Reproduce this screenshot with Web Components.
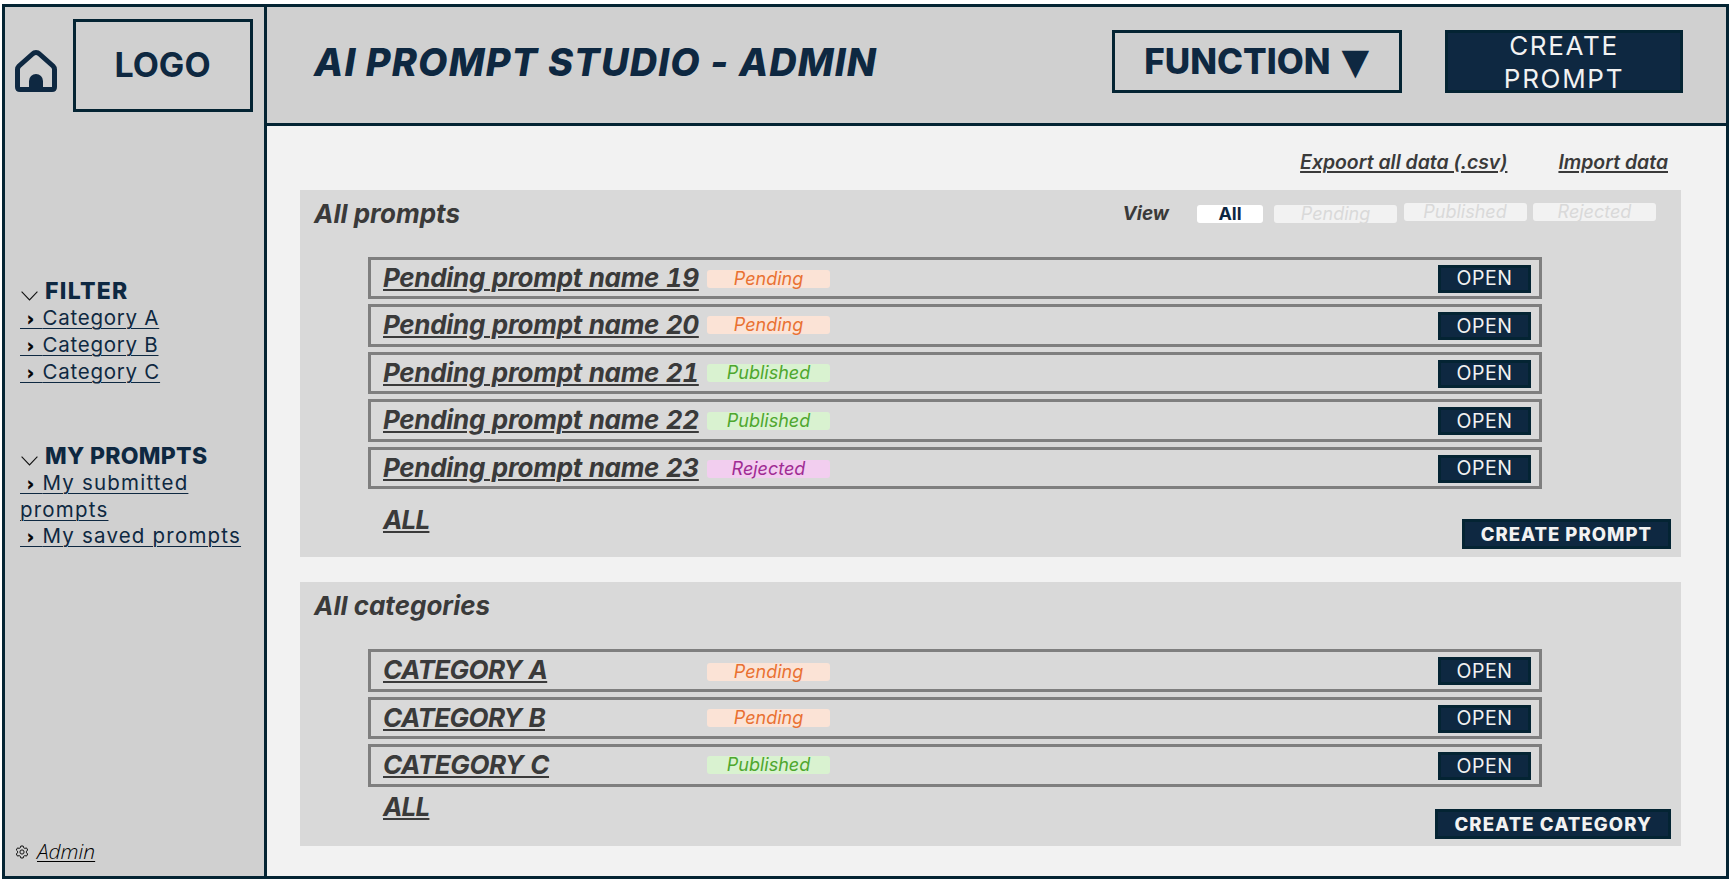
<!DOCTYPE html>
<html lang="en">
<head>
<meta charset="utf-8">
<title>AI Prompt Studio - Admin</title>
<style>
html,body{margin:0;padding:0;background:#fff;}
body{font-family:Inter,"Liberation Sans",sans-serif;}
</style>
</head>
<body>
<app-frame>
  <app-sidebar slot="side">
    <side-group slot="a" heading="FILTER" style="--top:166px;--ls:1.3px">
      <side-link>Category A</side-link><br>
      <side-link>Category B</side-link><br>
      <side-link>Category C</side-link>
    </side-group>
    <side-group slot="a" heading="MY PROMPTS" style="--top:57px;--ls:.3px">
      <side-link style="letter-spacing:1.2px">My submitted<br>prompts</side-link><br>
      <side-link style="letter-spacing:1.2px">My saved prompts</side-link>
    </side-group>
  </app-sidebar>
  <app-header slot="head"></app-header>
  <main-links slot="main"></main-links>
  <data-panel slot="main" heading="All prompts" views style="--after:68px;--all-top:15px;--pb:8px">
    <data-row nudge="2"><span slot="name">Pending prompt name 19</span><status-chip kind="pending" slot="chip">Pending</status-chip></data-row>
    <data-row nudge="-1"><span slot="name">Pending prompt name 20</span><status-chip kind="pending" slot="chip">Pending</status-chip></data-row>
    <data-row nudge="-1"><span slot="name">Pending prompt name 21</span><status-chip kind="published" slot="chip">Published</status-chip></data-row>
    <data-row nudge="0"><span slot="name">Pending prompt name 22</span><status-chip kind="published" slot="chip">Published</status-chip></data-row>
    <data-row nudge="1"><span slot="name">Pending prompt name 23</span><status-chip kind="rejected" slot="chip">Rejected</status-chip></data-row>
    <solid-button slot="create">CREATE PROMPT</solid-button>
  </data-panel>
  <data-panel slot="main" heading="All categories" style="--after:59.6px;--all-top:4px;--gap-top:25px;--pb:7px">
    <data-row nudge="2"><span slot="name" style="letter-spacing:-.6px">CATEGORY A</span><status-chip kind="pending" slot="chip">Pending</status-chip></data-row>
    <data-row nudge="-1"><span slot="name" style="letter-spacing:-.6px">CATEGORY B</span><status-chip kind="pending" slot="chip">Pending</status-chip></data-row>
    <data-row nudge="-1"><span slot="name" style="letter-spacing:-.4px">CATEGORY C</span><status-chip kind="published" slot="chip">Published</status-chip></data-row>
    <solid-button slot="create" style="letter-spacing:1.1px">CREATE CATEGORY</solid-button>
  </data-panel>
</app-frame>

<script>
const def=(name,html)=>{
  customElements.define(name,class extends HTMLElement{
    constructor(){super();this.attachShadow({mode:'open'});}
    connectedCallback(){
      this.shadowRoot.innerHTML=typeof html==='function'?html(this):html;
    }
  });
};
const DISPLAY='Inter,"Liberation Sans",sans-serif';

def('app-frame',`<style>
:host{display:grid;box-sizing:border-box;width:1727px;height:875px;margin:4px 0 0 2px;border:3px solid #042433;
grid-template-columns:262px 1fr;background:#f2f2f2;}
.side{border-right:3px solid #042433;background:#d0d0d0;min-height:0;display:flex;}
.right{display:flex;flex-direction:column;min-width:0;}
.main{flex:1;display:flex;flex-direction:column;padding:0 45px 0 33px;}
</style>
<div class="side"><slot name="side"></slot></div>
<div class="right"><slot name="head"></slot><div class="main"><slot name="main"></slot></div></div>`);

def('app-sidebar',`<style>
:host{display:flex;flex-direction:column;flex:1;padding:12px 0 0 0;box-sizing:border-box;}
.top{display:flex;align-items:flex-start;padding-left:10px;gap:15.5px;}
.home{margin-top:31px;display:block;}
.logo{box-sizing:border-box;width:180px;height:93px;border:3px solid #042433;display:flex;align-items:center;justify-content:center;
font:700 34px/1 ${DISPLAY};color:#0e2841;padding-bottom:2px;}
.groups{flex:1;}
.admin{display:flex;align-items:center;gap:8px;padding:0 0 14px 10px;font:italic 300 21px/1 "Open Sans",sans-serif;color:#000;}
.admin span{text-decoration:underline;text-decoration-thickness:1px;text-underline-offset:2px;}
</style>
<div class="top">
<svg class="home" width="42" height="42" viewBox="0 0 42 42" aria-hidden="true"><path d="M21 2.5Q19 2.5 17.5 4L4 16Q2.5 17.5 2.5 19.5V37Q2.5 39.5 5 39.5H37Q39.5 39.5 39.5 37V19.5Q39.5 17.5 38 16L24.5 4Q23 2.5 21 2.5Z" fill="none" stroke="#0e2841" stroke-width="5" stroke-linejoin="round"/><path d="M14 40V31a7 7 0 0 1 14 0V40Z" fill="#0e2841"/></svg>
<div class="logo">LOGO</div>
</div>
<div class="groups"><slot name="a"></slot></div>
<div class="admin">
<svg width="14" height="14" viewBox="0 0 14 14" aria-hidden="true"><path d="M5.8 1h2.4l.4 1.7 1.3.7 1.6-.5 1.2 2.1-1.2 1.2v1.6l1.2 1.2-1.2 2.1-1.6-.5-1.3.7L8.2 13H5.8l-.4-1.7-1.3-.7-1.6.5-1.2-2.1 1.2-1.2V6.2L1.3 5l1.2-2.1 1.6.5 1.3-.7Z" fill="none" stroke="#111" stroke-width="1"/><circle cx="7" cy="7" r="2.1" fill="none" stroke="#111" stroke-width="1"/></svg>
<span>Admin</span></div>`);

def('side-group',el=>`<style>
:host{display:block;padding:var(--top,0) 0 0 15px;color:#0e2841;}
.h{display:flex;align-items:center;gap:7px;font:800 23px/26px ${DISPLAY};color:#0e2841;height:26px;letter-spacing:var(--ls,0);}
svg{margin-top:9px;flex:none;margin-left:1px;}
.b{font:400 20.5px/26px ${DISPLAY};margin-top:1px;width:240px;letter-spacing:.75px;}
</style>
<div class="h"><svg width="17" height="10" viewBox="0 0 17 10" aria-hidden="true"><path d="M.6.7 8.5 9 16.4.7" fill="none" stroke="#111" stroke-width="1.1"/></svg><span>${el.getAttribute('heading')}</span></div>
<div class="b"><slot></slot></div>`);

def('side-link',`<style>
:host{display:inline;color:#0e2841;text-decoration:underline;text-decoration-thickness:1px;text-underline-offset:3px;}
.c{color:#000;font-weight:800;font-size:17px;font-family:"DejaVu Sans",sans-serif;letter-spacing:1.2px;-webkit-text-stroke:.6px #000;}
</style><span class="c">&nbsp;›&nbsp;</span><slot></slot>`);

def('app-header',`<style>
:host{display:flex;align-items:flex-start;height:119px;box-sizing:border-box;background:#d0d0d0;border-bottom:3px solid #042433;padding:0 43px 0 47px;color:#0e2841;}
h1{margin:29px 0 0 0;font:italic 800 38px/52px ${DISPLAY};color:#0e2841;flex:1;letter-spacing:1.15px;white-space:nowrap;}
.fn{box-sizing:border-box;width:289.5px;height:63px;margin-top:23px;border:3px solid #042433;display:flex;align-items:center;justify-content:center;gap:11px;font:800 35px/1 ${DISPLAY};color:#0e2841;}
.fn i{font:normal 36px/1 "DejaVu Sans",sans-serif;}
.cp{box-sizing:border-box;width:238px;height:63px;margin:23px 0 0 43.5px;background:#0e2841;border:3px solid #042433;color:#f2f2f2;text-align:center;font:400 26px/33px ${DISPLAY};letter-spacing:1.7px;}
.cp span{display:block;margin-top:-4px;}
</style>
<h1>AI PROMPT STUDIO - ADMIN</h1>
<div class="fn"><span>FUNCTION</span><i>▼</i></div>
<div class="cp"><span>CREATE<br>PROMPT</span></div>`);

def('main-links',`<style>
:host{display:flex;justify-content:flex-end;gap:51px;height:64px;box-sizing:border-box;padding:22.5px 13px 0 0;font:italic 600 19.4px/26px ${DISPLAY};color:#3a3a3a;}
span{text-decoration:underline;text-decoration-thickness:1.5px;text-underline-offset:2px;white-space:nowrap;}
</style><span>Expoort all data (.csv)</span><span>Import data</span>`);

def('data-panel',el=>`<style>
:host{display:block;background:#d9d9d9;margin-top:var(--gap-top,0);}
.head{height:67px;box-sizing:border-box;display:flex;align-items:flex-start;padding:0 25px 0 14px;color:#3a3a3a;}
.head b{font:italic 700 26px/36px ${DISPLAY};margin-top:6px;flex:1;}
.view{display:flex;align-items:flex-start;margin-top:13px;font:italic 18px/18px ${DISPLAY};}
.view em{font-weight:700;font-size:19px;margin:2px 28px 0 0;color:#3a3a3a;}
.view span{box-sizing:border-box;width:123px;height:18px;border-radius:3px;background:#f2f2f2;color:#d9d9d9;text-align:center;margin-left:6.5px;}
.view .all{width:66px;background:#fff;color:#0e2841;font:700 18px/18px ${DISPLAY};margin-left:0;margin-right:4.5px;margin-top:2px;}
.view .p{margin-top:2px;}
.rows{display:flex;flex-direction:column;gap:5.1px;margin:0 139px 0 68px;}
.foot{height:var(--after);box-sizing:border-box;display:flex;justify-content:space-between;align-items:flex-end;padding:0 10px var(--pb) 83px;}
.all-link{align-self:flex-start;margin-top:var(--all-top);font:italic 700 26px/32px ${DISPLAY};letter-spacing:-.8px;color:#3a3a3a;text-decoration:underline;text-decoration-thickness:2px;text-underline-offset:2px;}
</style>
<div class="head"><b>${el.getAttribute('heading')}</b>${el.hasAttribute('views')?`<div class="view"><em>View</em><span class="all">All</span><span class="p">Pending</span><span>Published</span><span>Rejected</span></div>`:''}</div>
<div class="rows"><slot></slot></div>
<div class="foot"><span class="all-link">ALL</span><slot name="create"></slot></div>`);

def('data-row',el=>`<style>
:host{display:flex;align-items:center;box-sizing:border-box;height:42.4px;border:3px solid #7f7f7f;padding:0 8px 0 12px;}
.name{width:324px;flex:none;font:italic 700 26px/32px ${DISPLAY};font-variant-numeric:tabular-nums;letter-spacing:-.3px;color:#3a3a3a;white-space:nowrap;text-decoration:underline;text-decoration-thickness:2px;text-underline-offset:2px;margin-top:-1px;}
.chip{flex:1;display:flex;margin-top:${el.getAttribute('nudge')||0}px;}
.open{box-sizing:border-box;width:93px;height:28px;margin-top:1px;padding-top:1px;background:#0e2841;border:3px solid #042433;color:#f2f2f2;display:flex;align-items:center;justify-content:center;font:400 19.5px/1 ${DISPLAY};letter-spacing:.6px;}
</style>
<span class="name"><slot name="name"></slot></span>
<span class="chip"><slot name="chip"></slot></span>
<span class="open">OPEN</span>`);

const chipColors={pending:['#fbe3d6','#e97132'],published:['#d9f2d0','#4ea72e'],rejected:['#f2ceef','#a02b93']};
def('status-chip',el=>{const c=chipColors[el.getAttribute('kind')];return `<style>
:host{display:block;box-sizing:border-box;width:123px;height:18px;border-radius:3px;background:${c[0]};color:${c[1]};text-align:center;font:italic 400 18px/18px ${DISPLAY};}
</style><slot></slot>`});

def('solid-button',`<style>
:host{display:flex;align-items:center;justify-content:center;box-sizing:border-box;height:30px;padding:0 16px;background:#0e2841;border:3px solid #042433;color:#f2f2f2;font:800 18.5px/1 ${DISPLAY};letter-spacing:1px;white-space:nowrap;}
</style><slot></slot>`);
</script>
</body>
</html>
